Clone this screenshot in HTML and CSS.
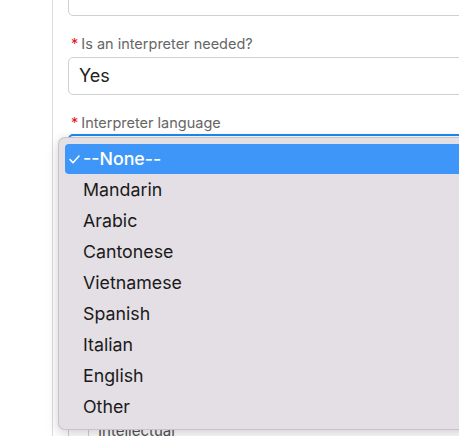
FILE: index.html
```html
<!DOCTYPE html>
<html lang="en">
<head>
    <meta charset="UTF-8">
    <meta name="viewport" content="width=device-width, initial-scale=1.0">
    <title>Referral Form</title>
    <link rel="stylesheet" href="styles.css">
</head>
<body>
    <div class="page">
        <div class="sidebar"></div>

        <div class="content">
            <div class="field first">
                <div class="input"></div>
            </div>

            <div class="field">
                <div class="label"><span class="req">*</span>Is an interpreter needed?</div>
                <div class="input">Yes</div>
            </div>

            <div class="field">
                <div class="label"><span class="req">*</span>Interpreter language</div>
                <div class="input select focused"></div>

                <!-- native select popup, open -->
                <div class="popup">
                    <div class="option selected">
                        <svg class="check" width="11" height="9" viewBox="0 0 11 9">
                            <polyline points="1,4.5 4,7.8 10,1" fill="none" stroke="#fff" stroke-width="1.5" stroke-linecap="round" stroke-linejoin="round"/>
                        </svg>
                        --None--
                    </div>
                    <div class="option">Mandarin</div>
                    <div class="option">Arabic</div>
                    <div class="option">Cantonese</div>
                    <div class="option">Vietnamese</div>
                    <div class="option">Spanish</div>
                    <div class="option">Italian</div>
                    <div class="option">English</div>
                    <div class="option">Other</div>
                </div>
            </div>

            <!-- rest of the form sits behind the popup -->
            <div class="field below">
                <div class="tree">
                    <div class="tree-list">
                        <div class="tree-item">Intellectual</div>
                    </div>
                </div>
            </div>
        </div>
    </div>
</body>
</html>
```

FILE: styles.css
```css
body {
    margin: 0;
    background: #fff;
    font-family: 'Inter', 'Open Sans', sans-serif;
    color: #222;
    overflow: hidden;
}

.page {
    display: flex;
    height: 436px;
}

.sidebar {
    width: 52px;
    flex-shrink: 0;
    border-right: 1px solid #dcdcdc;
}

.content {
    position: relative;
    padding-left: 15px;
    width: 520px;
    flex-shrink: 0;
}

.field {
    position: relative;
    margin-top: 18px;
}

.field.first {
    margin-top: -22px;
}

.field.below {
    margin-top: 248px;
}

.label {
    height: 20px;
    line-height: 20px;
    font-size: 14.5px;
    color: #666;
    margin-bottom: 3px;
    padding-left: 3px;
}

.req {
    color: #e8112d;
    margin-right: 3px;
}

.input {
    box-sizing: border-box;
    height: 38px;
    border: 1px solid #d0d0d0;
    border-radius: 5px;
    padding: 0 10px;
    font-size: 18px;
    line-height: 36px;
    color: #222;
}

.input.focused {
    border: 2px solid #1b8cf2;
    margin-top: -2px;
}

.popup {
    position: absolute;
    left: -10px;
    top: 24px;
    width: 520px;
    box-sizing: border-box;
    padding: 6px;
    background: #e4dfe5;
    border: 1px solid rgba(0, 0, 0, 0.12);
    border-radius: 7px;
    box-shadow: 0 0 10px rgba(0, 0, 0, 0.08), 0 6px 14px rgba(0, 0, 0, 0.12);
    z-index: 10;
}

.option {
    position: relative;
    height: 31px;
    line-height: 30px;
    padding-left: 18px;
    font-size: 17.8px;
    color: #1a1a1a;
    border-radius: 4px;
}

.option.selected {
    background: #3e97f8;
    color: #fff;
    font-weight: 500;
    height: 30px;
    line-height: 30px;
    margin-bottom: 1px;
}

.check {
    position: absolute;
    left: 4px;
    top: 11px;
}

.tree {
    border: 1px solid #d0d0d0;
    border-radius: 5px;
    padding: 0 0 6px 19px;
}

.tree-list {
    border-left: 1px solid #d0d0d0;
}

.tree-item {
    height: 34px;
    line-height: 20px;
    padding-left: 9px;
    font-size: 15px;
    color: #555;
}
```
